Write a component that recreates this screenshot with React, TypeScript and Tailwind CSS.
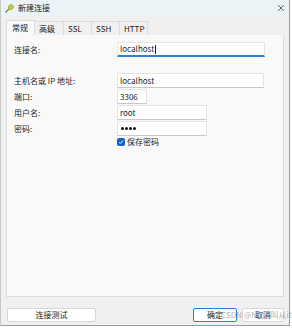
import React from "react";

const font = { fontFamily: '"Noto Sans CJK SC", "Noto Sans", sans-serif' };

function Input({ w, value, focused, password }: { w: string; value: string; focused?: boolean; password?: boolean }) {
  return (
    <div
      className={`${w} h-[15px] bg-white border border-[#e4e4e4] ${focused ? "border-b-2 border-b-[#2f7fd6]" : "border-b-[#c8c8c8]"} flex items-center pl-[2px] text-[8px] leading-none text-[#1b1b1b]`}
    >
      {password ? (
        <span className="flex gap-[1px] ml-[1px]">
          <span className="w-[3px] h-[3px] rounded-full bg-[#111]" />
          <span className="w-[3px] h-[3px] rounded-full bg-[#111]" />
          <span className="w-[3px] h-[3px] rounded-full bg-[#111]" />
          <span className="w-[3px] h-[3px] rounded-full bg-[#111]" />
        </span>
      ) : (
        <span>{value}</span>
      )}
      {focused && <span className="ml-[1px] w-px h-[9px] bg-[#222]" />}
    </div>
  );
}

function Row({ label, children }: { label: string; children: React.ReactNode }) {
  return (
    <div className="flex items-center h-[15px]">
      <div className="w-[103px] text-[8px] leading-none text-[#1b1b1b]">{label}</div>
      {children}
    </div>
  );
}

export default function App() {
  return (
    <div className="w-[292px] h-[328px] bg-white" style={font}>
      <div className="w-[290px] h-[326px] bg-[#f0f0f0] border-r border-b border-[#9a9a9a] border-l border-l-[#c8c8c8] flex flex-col">
        {/* title bar */}
        <div className="h-[16px] bg-[#ebf3f6] flex items-center pl-[3px] pr-[4px]">
          <svg width="11" height="11" viewBox="0 0 11 11">
            <path d="M2 9 L5 6" stroke="#7a9a3a" strokeWidth="1.6" strokeLinecap="round" />
            <rect x="4.5" y="1.5" width="5" height="5" rx="1" transform="rotate(45 7 4)" fill="#8dbb3c" />
            <rect x="5.5" y="2.5" width="3" height="3" rx="0.5" transform="rotate(45 7 4)" fill="#f2c230" />
          </svg>
          <span className="ml-[3px] text-[8px] leading-none text-[#222]">新建连接</span>
          <div className="flex-1" />
          <svg width="8" height="8" viewBox="0 0 8 8">
            <path d="M1 1 L7 7 M7 1 L1 7" stroke="#555" strokeWidth="0.9" />
          </svg>
        </div>
        {/* tabs */}
        <div className="mt-[4px] ml-[5px] flex items-end h-[15px]">
          <div className="w-[29px] h-[15px] bg-[#f9f9f9] border border-b-0 border-[#dcdcdc] flex items-center pl-[5px] text-[8px] leading-none text-[#1b1b1b]">常规</div>
          <div className="w-[29px] h-[14px] border-t border-r border-[#dcdcdc] flex items-center pl-[4px] text-[8px] leading-none text-[#1b1b1b]">高级</div>
          <div className="w-[28px] h-[14px] border-t border-r border-[#dcdcdc] flex items-center pl-[4px] text-[8px] leading-none text-[#1b1b1b]">SSL</div>
          <div className="w-[28px] h-[14px] border-t border-r border-[#dcdcdc] flex items-center pl-[4px] text-[8px] leading-none text-[#1b1b1b]">SSH</div>
          <div className="w-[28px] h-[14px] border-t border-r border-[#dcdcdc] flex items-center pl-[4px] text-[8px] leading-none text-[#1b1b1b]">HTTP</div>
        </div>
        {/* panel */}
        <div className="ml-[5px] w-[278px] h-[262px] bg-[#f9f9f9] border border-t-0 border-[#dcdcdc] pl-[7px] pt-[7px] flex flex-col">
          <Row label="连接名:">
            <Input w="w-[148px]" value="localhost" focused />
          </Row>
          <div className="h-[16px]" />
          <div className="flex flex-col gap-[1px]">
            <Row label="主机名或 IP 地址:">
              <Input w="w-[147px]" value="localhost" />
            </Row>
            <Row label="端口:">
              <Input w="w-[30px]" value="3306" />
            </Row>
            <Row label="用户名:">
              <Input w="w-[90px]" value="root" />
            </Row>
            <Row label="密码:">
              <Input w="w-[90px]" value="" password />
            </Row>
          </div>
          <div className="flex items-center mt-[1px] ml-[103px] h-[10px]">
            <div className="w-[8px] h-[8px] rounded-[2px] bg-[#1464c0] flex items-center justify-center">
              <svg width="6" height="6" viewBox="0 0 6 6">
                <path d="M1 3.2 L2.4 4.5 L5 1.5" stroke="white" strokeWidth="0.9" fill="none" />
              </svg>
            </div>
            <span className="ml-[2px] text-[8px] leading-none text-[#1b1b1b]">保存密码</span>
          </div>
        </div>
        {/* buttons */}
        <div className="mt-[11px] ml-[6px] flex items-center h-[14px]">
          <div className="w-[89px] h-[14px] bg-white border border-[#d6d6d6] rounded-[2px] flex items-center justify-center text-[8px] leading-none text-[#1b1b1b]">连接测试</div>
          <div className="flex-1" />
          <div className="relative flex items-center">
            <div className="w-[44px] h-[14px] bg-white border border-[#2f7fd6] rounded-[2px] flex items-center justify-center text-[8px] leading-none text-[#1b1b1b]">确定</div>
            <div className="ml-[5px] mr-[5px] w-[42px] h-[14px] bg-white border border-[#d6d6d6] rounded-[2px] flex items-center justify-center text-[8px] leading-none text-[#1b1b1b]">取消</div>
            <span className="absolute left-[28px] top-[3px] text-[8px] leading-none text-[#9a9a9a]/80 whitespace-nowrap">CSDN @NG吼叫从it</span>
          </div>
        </div>
      </div>
    </div>
  );
}
